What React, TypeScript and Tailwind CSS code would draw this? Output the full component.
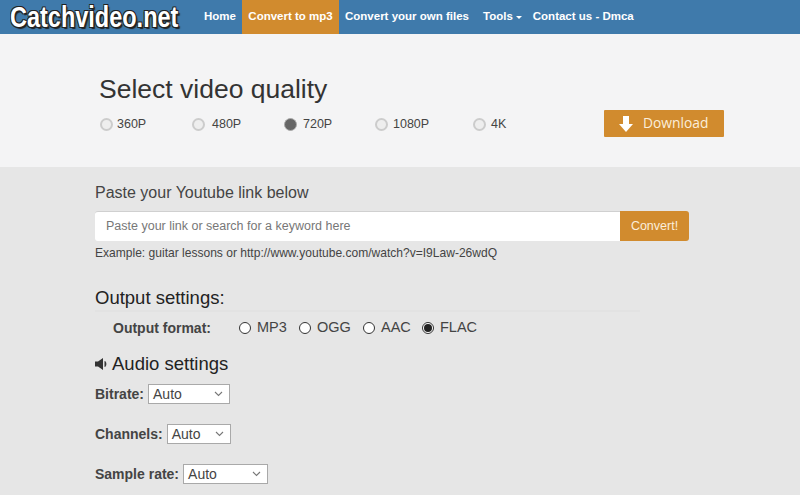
import React from "react";

const qualities = [
  { label: "360P", w: "w-[92px]", gap: "gap-[4px]" },
  { label: "480P", w: "w-[92px]", gap: "gap-[7px]" },
  { label: "720P", w: "w-[91px]", gap: "gap-[6px]", on: true },
  { label: "1080P", w: "w-[98px]", gap: "gap-[5px]" },
  { label: "4K", w: "w-[40px]", gap: "gap-[5px]" },
];

function SelectRow({ label, w, mb }: { label: string; w: string; mb: string }) {
  return (
    <div className={`flex items-center leading-[20px] ${mb}`}>
      <span className="font-bold text-[14px] text-[#444] mr-[4px]">{label}</span>
      <div className={`${w} h-[20px] bg-white border border-[#a9a9a9] flex items-center justify-between pl-[4px] pr-[6px] text-[14px] text-[#444]`}>
        <span>Auto</span>
        <svg width="9" height="6" viewBox="0 0 9 6" fill="none" stroke="#777" strokeWidth="1.1">
          <path d="M1 1l3.5 3.5L8 1" />
        </svg>
      </div>
    </div>
  );
}

export default function App() {
  return (
    <div className="w-[800px] h-[495px] overflow-hidden bg-[#e6e6e6] font-['Liberation_Sans',Arial,sans-serif]">
      <header className="h-[34px] bg-[#3f7aab] flex items-stretch text-white">
        <div className="w-[204px] flex items-center pl-[10px]">
          <span className="text-[29px] font-bold leading-none origin-left scale-x-[0.81] whitespace-nowrap [text-shadow:-1px_-1px_0_#222,1px_-1px_0_#222,-1px_1px_0_#222,1px_1px_0_#222,2px_2px_1px_#222]">
            Catchvideo.net
          </span>
        </div>
        <nav className="flex items-stretch text-[11.5px] font-bold">
          <a className="flex items-center pr-[6px] w-[38px]">Home</a>
          <a className="flex items-center bg-[#d18b2e] w-[97px] whitespace-nowrap justify-center">Convert to mp3</a>
          <a className="flex items-center pl-[6px] pr-[14px] whitespace-nowrap">Convert your own files</a>
          <a className="flex items-center pr-[11px] gap-[3px]">
            Tools
            <span className="w-0 h-0 border-x-[3px] border-x-transparent border-t-[3px] border-t-white" />
          </a>
          <a className="flex items-center whitespace-nowrap">Contact us - Dmca</a>
        </nav>
      </header>

      <section className="h-[133px] bg-[#f4f4f5] pl-[99px] pt-[38px]">
        <h1 className="text-[26.5px] leading-[34px] text-[#333]">Select video quality</h1>
        <div className="flex items-start mt-[4px]">
          <div className="flex items-center w-[505px] h-[28px] pl-[1px]">
            {qualities.map((q) => (
              <div key={q.label} className={`flex items-center shrink-0 ${q.gap} ${q.w}`}>
                <span className={`w-[13px] h-[13px] rounded-full shrink-0 ${q.on ? "bg-[#666] border border-[#aaa]" : "bg-[#eee] border-2 border-[#ccc]"}`} />
                <span className="text-[12.5px] text-[#444]">{q.label}</span>
              </div>
            ))}
          </div>
          <button className="w-[120px] h-[27px] bg-[#d18b2e] rounded-[1px] flex items-center text-[#fbeedb] text-[13.8px] pl-[15px] font-['Open_Sans',sans-serif]">
            <svg width="14" height="16" viewBox="0 0 14 16" fill="#fff" className="mr-[10px]">
              <path d="M4 0h6v8h4l-7 8-7-8h4z" />
            </svg>
            Download
          </button>
        </div>
      </section>

      <main className="pl-[95px] pt-[16px]">
        <h2 className="text-[16px] leading-[20px] text-[#444]">Paste your Youtube link below</h2>
        <div className="flex w-[594px] h-[30px] mt-[8px]">
          <div className="flex-1 bg-white rounded-l-[3px] border-t border-[#d0d0d0] flex items-center pl-[11px] text-[12.5px] text-[#777]">
            Paste your link or search for a keyword here
          </div>
          <button className="w-[69px] bg-[#d18b2e] rounded-r-[3px] text-[#fbeedb] text-[12.5px]">Convert!</button>
        </div>
        <p className="text-[12.05px] leading-[14px] mt-[5px] text-[#444]">
          Example: guitar lessons or http://www.youtube.com/watch?v=I9Law-26wdQ
        </p>

        <div className="w-[545px] mt-[28px] border-b-2 border-[#e2e2e2] pb-[2px]">
          <h2 className="text-[18.5px] leading-[20px] text-[#222]">Output settings:</h2>
        </div>
        <div className="flex items-center ml-[18px] mt-[6px] h-[20px] text-[14.5px] text-[#444]">
          <span className="font-bold w-[126px] text-[14px] text-[#444]">Output format:</span>
          {[
            ["MP3", "w-[60px]"],
            ["OGG", "w-[64px]"],
            ["AAC", "w-[59px]"],
            ["FLAC", ""],
          ].map(([f, w]) => (
            <label key={f} className={`flex items-center gap-[6px] ${w}`}>
              <span className="w-[12px] h-[12px] rounded-full border border-[#333] bg-white flex items-center justify-center">
                {f === "FLAC" && <span className="w-[8px] h-[8px] rounded-full bg-[#222]" />}
              </span>
              {f}
            </label>
          ))}
        </div>

        <div className="flex items-center mt-[14px] h-[24px] mb-[8px]">
          <svg width="13" height="14" viewBox="0 0 13 14" fill="#333" className="mr-[4px]">
            <path d="M0 4.5h3L8 1v12L3 9.5H0z" />
            <path d="M10 4.5c1.2 1.3 1.2 3.7 0 5z" stroke="#333" strokeWidth="1" />
          </svg>
          <h2 className="text-[18.5px] text-[#222]">Audio settings</h2>
        </div>
        <SelectRow label="Bitrate:" w="w-[82px]" mb="mb-[20px]" />
        <SelectRow label="Channels:" w="w-[64px]" mb="mb-[20px]" />
        <SelectRow label="Sample rate:" w="w-[85px]" mb="" />
      </main>
    </div>
  );
}
